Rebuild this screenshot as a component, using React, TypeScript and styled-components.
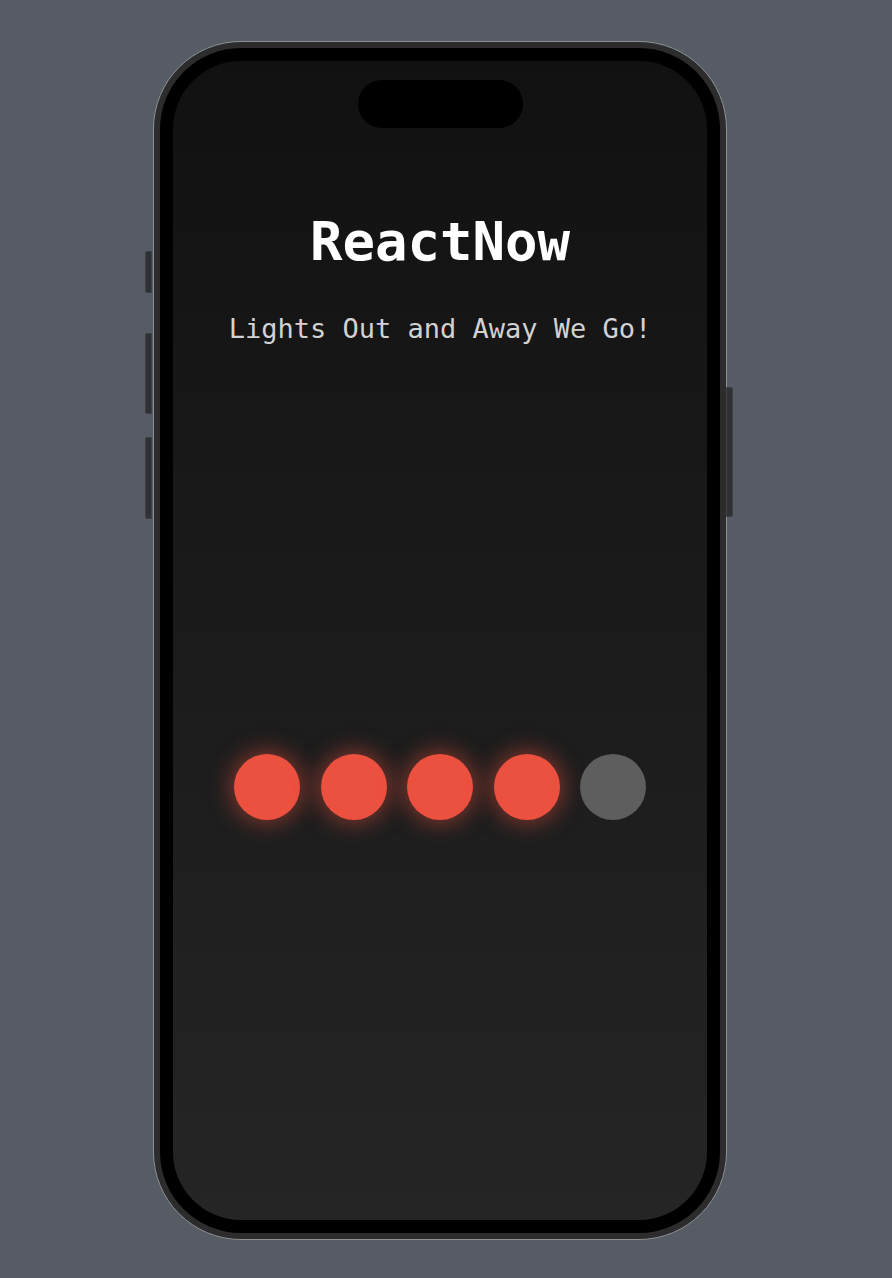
import React from "react";
import styled, { createGlobalStyle } from "styled-components";

const GlobalStyle = createGlobalStyle`
  html, body {
    margin: 0;
    padding: 0;
    background: #575c64;
  }
`;

const lights = [true, true, true, true, false];

const App = () => {
  return (
    <Page>
      <GlobalStyle />
      <Phone>
        <SideButton side="left" top={209} height={42} />
        <SideButton side="left" top={291} height={81} />
        <SideButton side="left" top={395} height={82} />
        <SideButton side="right" top={345} height={130} />
        <Bezel>
          <Screen>
            <Island />
            <Title>ReactNow</Title>
            <Subtitle>Lights Out and Away We Go!</Subtitle>
            <LightRow>
              {lights.map((on, i) => (
                <Light key={i} on={on} />
              ))}
            </LightRow>
          </Screen>
        </Bezel>
      </Phone>
    </Page>
  );
};

export default App;

const Page = styled.div`
  width: 892px;
  height: 1278px;
  padding: 41px 0 0 153px;
  box-sizing: border-box;
  display: flex;
  background: #575c64;
`;

const Phone = styled.div`
  position: relative;
  width: 574px;
  height: 1199px;
  box-sizing: border-box;
  border: 1px solid #8c8f93;
  border-radius: 88px;
  background: #2c2c2d;
  padding: 6px;
`;

const SideButton = styled.div<{ side: "left" | "right"; top: number; height: number }>`
  position: absolute;
  top: ${(p) => p.top}px;
  ${(p) => (p.side === "left" ? "left: -9px;" : "right: -7px;")}
  width: 7px;
  height: ${(p) => p.height}px;
  background: #2f3134;
  border: 1px solid #3e4146;
  box-sizing: border-box;
  border-radius: ${(p) => (p.side === "left" ? "2px 0 0 2px" : "0 2px 2px 0")};
`;

const Bezel = styled.div`
  width: 100%;
  height: 100%;
  box-sizing: border-box;
  background: #000;
  border-radius: 81px;
  padding: 13px;
`;

const Screen = styled.div`
  width: 100%;
  height: 100%;
  border-radius: 68px;
  overflow: hidden;
  background: linear-gradient(180deg, #111111 0%, #1b1b1b 50%, #252525 100%);
  display: flex;
  flex-direction: column;
  align-items: center;
  padding-top: 19px;
  box-sizing: border-box;
  font-family: "DejaVu Sans Mono", "Liberation Mono", monospace;
`;

const Island = styled.div`
  width: 165px;
  height: 48px;
  border-radius: 24px;
  background: #000;
`;

const Title = styled.div`
  margin-top: 87px;
  font-size: 54px;
  line-height: 54px;
  font-weight: 700;
  color: #ffffff;
`;

const Subtitle = styled.div`
  margin-top: 46px;
  font-size: 27px;
  line-height: 27px;
  color: #d2d2d2;
`;

const LightRow = styled.div`
  margin-top: 412px;
  display: flex;
  gap: 20.5px;
`;

const Light = styled.div<{ on: boolean }>`
  width: 66px;
  height: 66px;
  border-radius: 50%;
  background: ${(p) => (p.on ? "#ec503e" : "#5e5e5e")};
  box-shadow: ${(p) => (p.on ? "0 0 22px 3px rgba(236, 80, 62, 0.5)" : "none")};
`;
